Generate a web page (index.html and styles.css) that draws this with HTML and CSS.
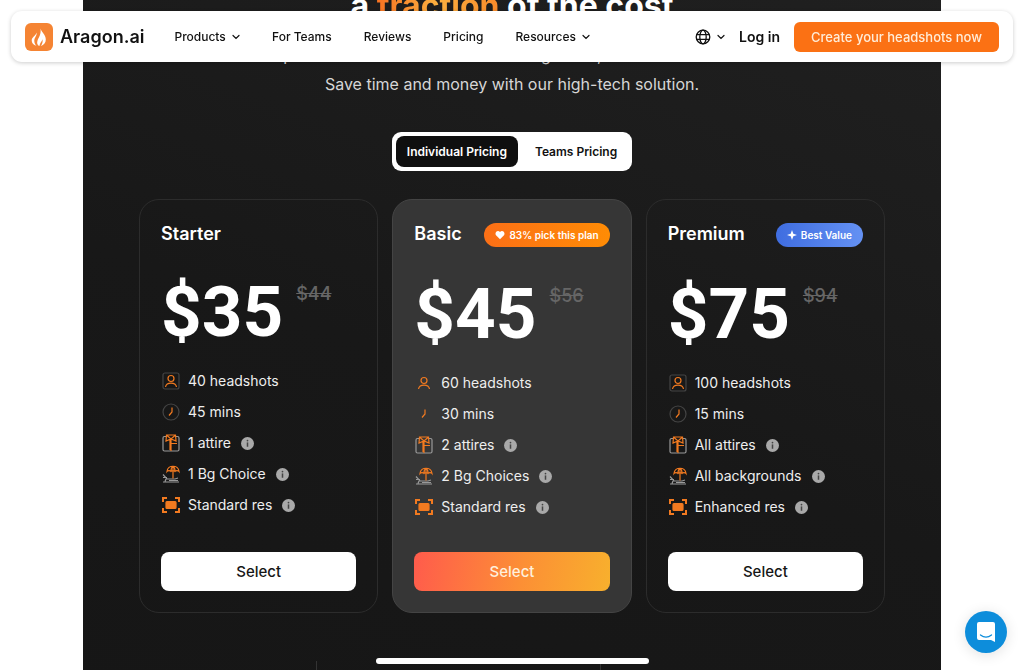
FILE: index.html
```html
<!DOCTYPE html>
<html lang="en">
<head>
    <meta charset="UTF-8">
    <meta name="viewport" content="width=device-width, initial-scale=1.0">
    <title>Pricing - Aragon.ai</title>
    <link rel="stylesheet" href="styles.css">
</head>
<body>
    <!-- Shared icons -->
    <svg class="sprite" aria-hidden="true">
        <symbol id="chevron" viewBox="0 0 8 8"><path d="M1 2.5l3 3 3-3" fill="none" stroke="currentColor" stroke-width="1.2" stroke-linecap="round"/></symbol>
        <symbol id="person" viewBox="0 0 18 18">
            <rect class="frame" x="1" y="1" width="16" height="16" rx="2"/>
            <circle cx="9" cy="6.5" r="3"/><path d="M3.500 15c.6-3 2.800-3.800 5.500-3.800s4.900.8 5.500 3.800"/>
        </symbol>
        <symbol id="clock" viewBox="0 0 18 18">
            <circle class="frame" cx="9" cy="9" r="8"/><path d="M10 4.500v4.500L7 12.500"/>
        </symbol>
        <symbol id="attire" viewBox="0 0 18 18">
            <path class="grey" d="M4 2.500H2.500A1.500 1.500 0 0 0 1 4v11.500A1.500 1.500 0 0 0 2.500 17h13a1.500 1.500 0 0 0 1.500-1.500V4a1.500 1.500 0 0 0-1.500-1.500H14"/>
            <path d="M4.500 1h9l.5 6L9 5 4 7zM5 1.500L9 5l4-3.500M9 5v12M8 5v11M9.500 9.500H15"/>
        </symbol>
        <symbol id="beach" viewBox="0 0 18 18">
            <path class="grey" d="M1 9.500l4 4.500h8l3-1M1 12.500h4M4 14l-1 2.500M1 17h16M7 15.500h9"/>
            <path d="M5 6.500C5.500-.5 16.500-.5 17 6.500c-1-1.300-3-1.300-4 0-1-1.300-3-1.300-4 0-1-1.300-3-1.300-4 0zM9 6c0-2.500.7-4 2-4.500 1.300.5 2 2 2 4.500M11 1.500v12"/>
        </symbol>
        <symbol id="res" viewBox="0 0 18 18">
            <path class="thick" d="M1 6V2h4M13 2h4v4M17 12v4h-4M5 16H1v-4"/><rect class="solid" x="4" y="5.500" width="10" height="7" rx="1"/>
        </symbol>
        <symbol id="info" viewBox="0 0 12 12"><circle cx="6" cy="6" r="6" fill="#a9a9a9"/><circle cx="6" cy="3.300" r=".8" fill="#444"/><path d="M6 5v4" fill="none" stroke="#444" stroke-width="1.400"/></symbol>
    </svg>

    <header class="navbar">
        <a class="brand" href="#">
            <svg class="logo" viewBox="0 0 28 28" aria-hidden="true">
                <rect width="28" height="28" rx="6" fill="#f58433"/>
                <path d="M15.500 5.500c.8 3.500 5.300 6 5.300 11 0 3.200-1.800 5.500-5 6.500 1.600-2.200 2.200-4.300 1.600-6.800-.6 2.500-2.500 3.500-3 6.800-2.200-.8-2.800-3.200-1.800-5.800 1.200-3.200 3.700-5.500 2.900-11.700z" fill="#fff"/>
                <path d="M11.700 9.500c.3 3.500-2.400 5-2.400 8.300 0 2 .7 3.700 2.100 5-3-.7-4.700-2.700-4.700-5.300 0-3.300 3.800-4.500 5-8z" fill="#fff"/>
            </svg>
            Aragon.ai
        </a>
        <nav class="links">
            <a href="#">Products <svg class="chevron"><use href="#chevron"/></svg></a>
            <a href="#">For Teams</a>
            <a href="#">Reviews</a>
            <a href="#">Pricing</a>
            <a href="#">Resources <svg class="chevron"><use href="#chevron"/></svg></a>
        </nav>
        <div class="actions">
            <button class="language" aria-label="Language">
                <svg class="globe" viewBox="0 0 16 16" aria-hidden="true"><circle cx="8" cy="8" r="6.800"/><ellipse cx="8" cy="8" rx="3.200" ry="6.800"/><path d="M1.500 5.700h13M1.500 10.300h13"/></svg>
                <svg class="chevron"><use href="#chevron"/></svg>
            </button>
            <a class="login" href="#">Log in</a>
            <a class="cta" href="#">Create your headshots now</a>
        </div>
    </header>

    <main class="pricing">
        <h1>a <span>fraction</span> of the cost</h1>
        <p class="intro">Ditch the photo shoots and the cost of a long event, with all the results at home.<br>Save time and money with our high-tech solution.</p>

        <div class="toggle">
            <button class="active">Individual Pricing</button>
            <button>Teams Pricing</button>
        </div>

        <div class="plans">
            <section class="plan">
                <div class="plan-head"><h2>Starter</h2></div>
                <div class="price"><strong>$35</strong><del>$44</del></div>
                <ul>
                    <li><svg class="icon"><use href="#person"/></svg>40 headshots</li>
                    <li><svg class="icon"><use href="#clock"/></svg>45 mins</li>
                    <li><svg class="icon"><use href="#attire"/></svg>1 attire <svg class="info"><use href="#info"/></svg></li>
                    <li><svg class="icon"><use href="#beach"/></svg>1 Bg Choice <svg class="info"><use href="#info"/></svg></li>
                    <li><svg class="icon"><use href="#res"/></svg>Standard res <svg class="info"><use href="#info"/></svg></li>
                </ul>
                <button class="select">Select</button>
            </section>

            <section class="plan featured">
                <div class="plan-head">
                    <h2>Basic</h2>
                    <span class="badge popular"><svg viewBox="0 0 10 10" aria-hidden="true"><path d="M5 9.300L1 5.200C-.8 2.800 2.600-.8 5 2c2.400-2.800 5.800.8 4 3.200z" fill="#fff"/></svg>83% pick this plan</span>
                </div>
                <div class="price"><strong>$45</strong><del>$56</del></div>
                <ul>
                    <li><svg class="icon"><use href="#person"/></svg>60 headshots</li>
                    <li><svg class="icon"><use href="#clock"/></svg>30 mins</li>
                    <li><svg class="icon"><use href="#attire"/></svg>2 attires <svg class="info"><use href="#info"/></svg></li>
                    <li><svg class="icon"><use href="#beach"/></svg>2 Bg Choices <svg class="info"><use href="#info"/></svg></li>
                    <li><svg class="icon"><use href="#res"/></svg>Standard res <svg class="info"><use href="#info"/></svg></li>
                </ul>
                <button class="select">Select</button>
            </section>

            <section class="plan">
                <div class="plan-head">
                    <h2>Premium</h2>
                    <span class="badge value"><svg viewBox="0 0 10 10" aria-hidden="true"><path d="M5 0l1.300 3.700L10 5 6.300 6.300 5 10 3.700 6.300 0 5l3.700-1.300z" fill="#fff"/></svg>Best Value</span>
                </div>
                <div class="price"><strong>$75</strong><del>$94</del></div>
                <ul>
                    <li><svg class="icon"><use href="#person"/></svg>100 headshots</li>
                    <li><svg class="icon"><use href="#clock"/></svg>15 mins</li>
                    <li><svg class="icon"><use href="#attire"/></svg>All attires <svg class="info"><use href="#info"/></svg></li>
                    <li><svg class="icon"><use href="#beach"/></svg>All backgrounds <svg class="info"><use href="#info"/></svg></li>
                    <li><svg class="icon"><use href="#res"/></svg>Enhanced res <svg class="info"><use href="#info"/></svg></li>
                </ul>
                <button class="select">Select</button>
            </section>
        </div>

        <div class="columns"><div></div><div></div><div></div></div>
    </main>

    <div class="home-bar"></div>
    <button class="chat" aria-label="Open chat">
        <svg viewBox="0 0 20 22" aria-hidden="true"><path d="M3 1h14a2 2 0 0 1 2 2v18l-4-2H3a2 2 0 0 1-2-2V3a2 2 0 0 1 2-2z" fill="#fff"/><path d="M4.500 14c3.500 2.600 7.500 2.600 11 0" fill="none" stroke="#0d8ddb" stroke-width="1.300" stroke-linecap="round"/></svg>
    </button>
</body>
</html>
```
FILE: styles.css
```css
* {
    box-sizing: border-box;
}
body {
    margin: 0;
    font-family: Inter, 'Liberation Sans', sans-serif;
    background-color: #fff;
    color: #111;
    overflow: hidden;
}
a {
    color: inherit;
    text-decoration: none;
}
button {
    font-family: inherit;
    border: 0;
    cursor: pointer;
}
.sprite {
    display: none;
}

/* Navbar */
.navbar {
    position: fixed;
    top: 11px;
    left: 11px;
    right: 11px;
    z-index: 10;
    display: flex;
    align-items: center;
    height: 51px;
    padding: 0 14px;
    background-color: #fff;
    border-radius: 11px;
    box-shadow: 0 1px 4px rgba(0,0,0,0.2);
    white-space: nowrap;
}
.brand {
    display: flex;
    align-items: center;
    gap: 7px;
    font-size: 18px;
    font-weight: 600;
}
.logo {
    width: 28px;
    height: 28px;
}
.links {
    display: flex;
    gap: 32px;
    margin-left: 30px;
    font-size: 12px;
    font-weight: 500;
}
.chevron {
    width: 8px;
    height: 8px;
    margin-left: 3px;
}
.actions {
    display: flex;
    align-items: center;
    gap: 14px;
    margin-left: auto;
}
.language {
    display: flex;
    align-items: center;
    gap: 3px;
    padding: 0;
    background: none;
    color: #111;
}
.globe {
    width: 16px;
    height: 16px;
    fill: none;
    stroke: #111;
    stroke-width: 1.3;
}
.login {
    font-size: 14px;
    font-weight: 600;
}
.cta {
    padding: 0 17px;
    line-height: 30px;
    border-radius: 6px;
    background-color: #fb7114;
    color: #ffecd8;
    font-size: 13px;
    font-weight: 500;
}

/* Pricing */
.pricing {
    display: flex;
    flex-direction: column;
    align-items: center;
    max-width: 858px;
    min-height: 100vh;
    margin: -14px auto 0;
    padding: 0 56px;
    background: linear-gradient(200deg, #202020, #181818 55%, #161616);
    color: #eee;
}
h1 {
    margin: 0;
    font-size: 32px;
    line-height: 40px;
    color: #fff;
}
h1 span {
    background: linear-gradient(90deg, #f97322, #fbb040, #f98a2a);
    background-clip: text;
    color: transparent;
}
.intro {
    margin: 15px 0 33px;
    font-size: 16px;
    line-height: 29px;
    text-align: center;
    white-space: nowrap;
    color: #d6d6d6;
}
.toggle {
    display: flex;
    padding: 4px;
    border-radius: 9px;
    background-color: #fff;
}
.toggle button {
    height: 31px;
    padding: 0 11px;
    border-radius: 8px;
    background: none;
    color: #111;
    font-size: 12px;
    font-weight: 600;
}
.toggle button + button {
    padding-left: 17px;
}
.toggle .active {
    background-color: #0f0f0f;
    color: #fff;
}
.plans {
    display: grid;
    grid-template-columns: repeat(3, 1fr);
    gap: 14px;
    width: 100%;
    margin-top: 28px;
}
.plan {
    display: flex;
    flex-direction: column;
    min-height: 414px;
    padding: 23px 21px 21px;
    border: 1px solid #2c2c2c;
    border-radius: 20px;
}
.featured {
    background-color: #363636;
    border-color: #444;
}
.plan-head {
    display: flex;
    justify-content: space-between;
}
h2 {
    margin: 0;
    font-size: 18px;
    line-height: 22px;
    font-weight: 600;
    color: #fff;
}
.badge {
    display: flex;
    align-items: center;
    gap: 4px;
    height: 24px;
    padding: 0 11px;
    border-radius: 12px;
    color: #fff;
    font-size: 10px;
    font-weight: 600;
    white-space: nowrap;
}
.badge svg {
    width: 10px;
    height: 10px;
}
.popular {
    background: linear-gradient(90deg, #fb6f16, #ff8c05);
}
.value {
    background: linear-gradient(90deg, #3f6de0, #6491f3);
}
.price {
    display: flex;
    gap: 13px;
    margin-top: 30px;
}
.price strong {
    font-family: Roboto, sans-serif;
    font-size: 71px;
    line-height: 74px;
    color: #fff;
}
.price del {
    padding-top: 7px;
    font-size: 18px;
    line-height: 24px;
    font-weight: 500;
    color: #666;
}
.plan ul {
    display: flex;
    flex-direction: column;
    gap: 7px;
    margin: 20px 0 0;
    padding: 0;
    list-style: none;
}
.plan li {
    display: flex;
    align-items: center;
    font-size: 14px;
    line-height: 24px;
}
.icon {
    --frame: #444;
    width: 18px;
    height: 18px;
    margin: 0 8px 0 1px;
    fill: none;
    stroke: #f27a20;
    stroke-width: 1.2;
}
.featured .icon {
    --frame: transparent;
}
.frame {
    stroke: var(--frame);
}
.grey {
    stroke: #999;
}
.thick {
    stroke-width: 2;
}
.solid {
    fill: #f27a20;
}
.info {
    width: 13px;
    height: 13px;
    margin-left: 10px;
}
.select {
    height: 39px;
    margin-top: auto;
    border-radius: 8px;
    background-color: #fff;
    color: #161616;
    font-size: 15px;
    font-weight: 500;
}
.featured .select {
    background: linear-gradient(100deg, #ff5b4c, #fc8f35 55%, #f8b02d);
    color: #fff0dc;
}

/* Column rules under the plans */
.columns {
    display: grid;
    grid-template-columns: 177fr 284fr 285fr;
    flex: 1;
    width: 100%;
    min-height: 40px;
    margin-top: 48px;
}
.columns div + div {
    border-left: 1px solid #333;
}

.home-bar {
    position: fixed;
    left: 50%;
    bottom: 6px;
    width: 273px;
    height: 6px;
    margin-left: -136px;
    border-radius: 3px;
    background-color: #fff;
}
.chat {
    position: fixed;
    right: 17px;
    bottom: 17px;
    display: grid;
    place-items: center;
    width: 42px;
    height: 42px;
    padding: 0;
    border-radius: 50%;
    background-color: #0d8ddb;
    box-shadow: 0 2px 14px rgba(0,0,0,0.12);
}
.chat svg {
    width: 20px;
    height: 22px;
}
```
